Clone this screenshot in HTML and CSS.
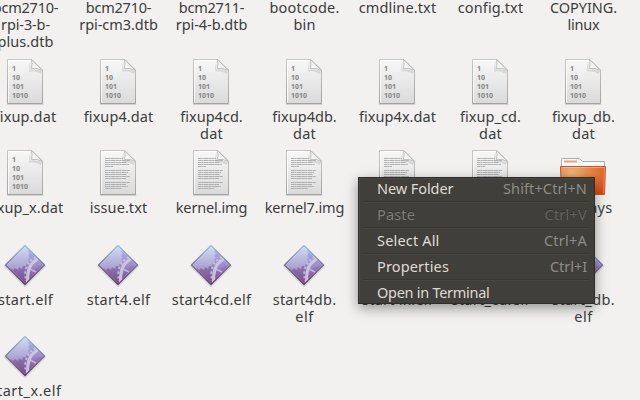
FILE: index.html
```html
<!DOCTYPE html>
<html lang="en">
<head>
<meta charset="utf-8">
<title>Files</title>
<link rel="stylesheet" href="styles.css">
</head>
<body>
<svg class="defs" aria-hidden="true">
  <defs>
    <linearGradient id="paper" x1="0" y1="0" x2="0" y2="1"><stop offset="0" stop-color="#f8f8f8"/><stop offset="1" stop-color="#dadada"/></linearGradient>
    <linearGradient id="edge" x1="0" y1="0" x2="0" y2="1"><stop offset="0" stop-color="#c6c6c6"/><stop offset="1" stop-color="#a3a3a3"/></linearGradient>
    <linearGradient id="fold" x1="0" y1="1" x2="1" y2="0"><stop offset="0" stop-color="#fff"/><stop offset=".5" stop-color="#eee"/><stop offset="1" stop-color="#bbb"/></linearGradient>
    <linearGradient id="gem" x1="0" y1="0" x2="0" y2="1"><stop offset="0" stop-color="#d2e0fa"/><stop offset="1" stop-color="#a79bcb"/></linearGradient>
    <linearGradient id="back" x1="0" y1="0" x2="0" y2="1"><stop offset="0" stop-color="#a9b6ee"/><stop offset=".5" stop-color="#9d90cb"/><stop offset="1" stop-color="#713a75"/></linearGradient>
    <linearGradient id="rim" x1="0" y1="0" x2="0" y2="1"><stop offset="0" stop-color="#9cc4dc"/><stop offset=".5" stop-color="#77719a"/><stop offset="1" stop-color="#633866"/></linearGradient>
    <radialGradient id="orange" cx=".25" cy=".2" r=".95"><stop offset="0" stop-color="#edb577"/><stop offset=".5" stop-color="#e8803f"/><stop offset="1" stop-color="#df4b16"/></radialGradient>
    <clipPath id="gemclip"><path d="M24 4.5 43.5 24 24 43.5 4.5 24z"/></clipPath>
    <g id="sheet">
      <path d="M6 46.4H42.5" stroke="#000" stroke-opacity=".13" stroke-width="1.2"/>
      <path d="M6.5 1.5H31L41.5 12V45.5H6.5z" fill="url(#paper)" stroke="url(#edge)"/>
      <path d="M7.5 44.5V2.5H30.5" fill="none" stroke="#fff" stroke-opacity=".8"/>
      <path d="M29.5 2.5V11.5Q35 10.5 41 13L40 16Q33 12 28.5 14Q27.5 9 29.5 2.5z" fill="#777" opacity=".2"/>
      <path d="M30.5 1.5Q31.5 6 30.5 10.5Q36 9.5 41.5 12.5z" fill="url(#fold)" stroke="#b4b4b4" stroke-width=".8"/>
    </g>
    <symbol id="binary" viewBox="0 0 48 48">
      <use href="#sheet"/>
      <g class="bits"><text x="11" y="12.5">1</text><text x="11" y="21.5">10</text><text x="11" y="30.5">101</text><text x="11" y="39.8">1010</text></g>
    </symbol>
    <symbol id="text" viewBox="0 0 48 48">
      <use href="#sheet"/>
      <path d="M11 9.5H29M11 11.5H36M11 13.5H33M11 15.5H35M11 17.5H19M11 21.5H36M11 23.5H34M11 25.5H33M11 27.5H36M11 29.5H32M11 33.5H36M11 35.5H32M11 37.5H34M11 39.5H28" stroke="#a8a8a8" stroke-width=".9" stroke-dasharray="3 .3 2 .3 5 .3"/>
    </symbol>
    <symbol id="elf" viewBox="0 0 48 48">
      <path d="M24 5.5 43.5 25 24 44.5 4.5 25z" fill="#000" stroke="#000" stroke-width="3" stroke-linejoin="round" opacity=".1"/>
      <path d="M24 4.5 43.5 24 24 43.5 4.5 24z" fill="url(#back)"/>
      <g clip-path="url(#gemclip)">
        <path d="M4 27 8 28 10 26 12 28 14 26 17 28 18 25 21 26 22 23 25 24 25 21 28 22 23 32 24 44H4z" fill="#79609a" opacity=".45"/>
        <path d="M4 4H27L26 7 28 8 27 11 29 12 27 15 29 17 27 18 28 21 26 22 25 25 22 25 21 28 18 26 17 29 14 27 12 29 10 27 8 29 4 27z" fill="url(#gem)"/>
        <path d="M44 25C37 23 31 29 29 42H44z" fill="#8d66aa" opacity=".45"/>
        <path d="M37 14.500Q38 18 33 20.500Q26 26 26.500 42" fill="none" stroke="#d3c9e5" stroke-width="3.200" opacity=".9"/>
        <path d="M35 16Q26 20 24.500 30Q24 36 25 40" fill="none" stroke="#d3c9e5" stroke-width="2" stroke-dasharray="2.200 2.400" opacity=".85"/>
        <path d="M29 28 35 31" stroke="#c3b7dc" stroke-width="1.500"/>
      </g>
      <path d="M24 5.5 42.5 24 24 42.5 5.5 24z" fill="none" stroke="#fff" stroke-opacity=".25"/>
      <path d="M24 4.5 43.5 24 24 43.5 4.5 24z" fill="none" stroke="url(#rim)" stroke-width="1.2" stroke-linejoin="round"/>
    </symbol>
    <symbol id="folder" viewBox="0 0 48 48">
      <path d="M2.5 20V10.5Q2.5 9.5 3.5 9.5H19Q21 9.5 22 11L23.5 12.500H45.5V20z" fill="#fbfbfb" stroke="#aaa"/>
      <path d="M5 12.5H18" stroke="#efa06e" stroke-width="2"/>
      <path d="M1.5 17.5H46.5L45.5 45.5H2.5z" fill="url(#orange)" stroke="#cc5427"/>
      <path d="M3 18.5H45.5L44.5 44" fill="none" stroke="#fff" stroke-opacity=".3"/>
    </symbol>
  </defs>
</svg>
<main class="files" id="files"></main>
<div class="menu" role="menu">
  <div class="item"><span data-w="76.5">New Folder</span><kbd data-w="84">Shift+Ctrl+N</kbd></div>
  <div class="item off"><span data-w="38">Paste</span><kbd data-w="42.5">Ctrl+V</kbd></div>
  <div class="item"><span data-w="62.5">Select All</span><kbd data-w="43">Ctrl+A</kbd></div>
  <div class="item"><span data-w="72">Properties</span><kbd data-w="37">Ctrl+I</kbd></div>
  <div class="item"><span data-w="112.5">Open in Terminal</span></div>
</div>
<script src="files.js"></script>
</body>
</html>
```
FILE: styles.css
```css
body { margin: 0; width: 640px; height: 400px; overflow: hidden; background: #f2f1f0; font-family: "Noto Sans", "Open Sans", sans-serif; font-size: 14.5px; color: #3c3c3c; }
.defs { position: absolute; width: 0; height: 0; }
.files { display: grid; grid-template-columns: repeat(7, 93px); grid-template-rows: 58px 91px 92px 91px 68px; width: 651px; margin-left: -21px; }
.file { display: flex; flex-direction: column; align-items: center; min-width: 0; }
.file.cut { margin-top: -1px; }
.icon { width: 48px; height: 48px; display: block; flex: none; margin: 0 2px 2px 0; }
.line { line-height: 17px; height: 17px; white-space: nowrap; }
.bits { font-family: "Noto Sans", sans-serif; font-weight: bold; font-size: 7px; fill: #858585; letter-spacing: 0; }
.menu { position: absolute; left: 358px; top: 177px; width: 237px; height: 127px; box-sizing: border-box; border: 1px solid #2e2d29; background: #403f3a; box-shadow: inset 1px 1px #4a4943, 0 4px 12px rgba(0,0,0,.4); padding: 0 5px 0 4px; }
.item { display: flex; justify-content: space-between; box-sizing: border-box; height: 26px; padding: 1px 2px 0 14px; line-height: 20px; color: #dfdbd2; border-bottom: 1px solid #474640; box-shadow: inset 0 -1px #373631; white-space: nowrap; }
.item:first-child { height: 25px; padding-top: 0; }
.item:last-child { height: 21px; border: 0; box-shadow: none; }
.item kbd { font: inherit; color: #8f8c84; }
.item.off { color: #827f78; text-shadow: 0 -1px #302f2b; }
.item.off kbd { color: #65635c; }
```
FILE: files.js
```js
// Each entry: icon, then pairs of label line and its width in pixels.
const rows = [
  [["", "bcm2710-", 65.5, "rpi-3-b-", 49, "plus.dtb", 56], ["", "bcm2710-", 65.5, "rpi-cm3.dtb", 78.5], ["", "bcm2711-", 65.5, "rpi-4-b.dtb", 71.5], ["", "bootcode.", 70, "bin", 22], ["", "cmdline.txt", 77.5], ["", "config.txt", 65.5], ["", "COPYING.", 67, "linux", 32]],
  [["binary", "fixup.dat", 61.5], ["binary", "fixup4.dat", 69.5], ["binary", "fixup4cd.", 62.5, "dat", 23], ["binary", "fixup4db.", 64.5, "dat", 23], ["binary", "fixup4x.dat", 77], ["binary", "fixup_cd.", 61, "dat", 23], ["binary", "fixup_db.", 63, "dat", 23]],
  [["binary", "fixup_x.dat", 75.5], ["text", "issue.txt", 57.5], ["text", "kernel.img", 71.5], ["text", "kernel7.img", 79.5], ["text", "kernel7l.img", 75], ["text", "kernel8.img", 79], ["folder", "overlays", 57.5]],
  [["elf", "start.elf", 55], ["elf", "start4.elf", 63.5], ["elf", "start4cd.elf", 79.5], ["elf", "start4db.", 63.5, "elf", 18.5], ["elf", "start4x.elf", 71], ["elf", "start_cd.elf", 78], ["elf", "start_db.", 63, "elf", 18.5]],
  [["elf", "start_x.elf", 72]]
];
document.getElementById("files").innerHTML = rows.flat().map(([icon, ...label]) => {
  let lines = "";
  for (let i = 0; i < label.length; i += 2) lines += `<span class="line" data-w="${label[i + 1]}">${label[i]}</span>`;
  return `<div class="file${icon ? "" : " cut"}">${icon ? `<svg class="icon"><use href="#${icon}"/></svg>` : ""}${lines}</div>`;
}).join("");
document.querySelectorAll("[data-w]").forEach(el => {
  const range = document.createRange();
  range.selectNodeContents(el);
  const extra = el.dataset.w - range.getBoundingClientRect().width;
  el.style.letterSpacing = (extra / el.textContent.length).toFixed(3) + "px";
});
```
